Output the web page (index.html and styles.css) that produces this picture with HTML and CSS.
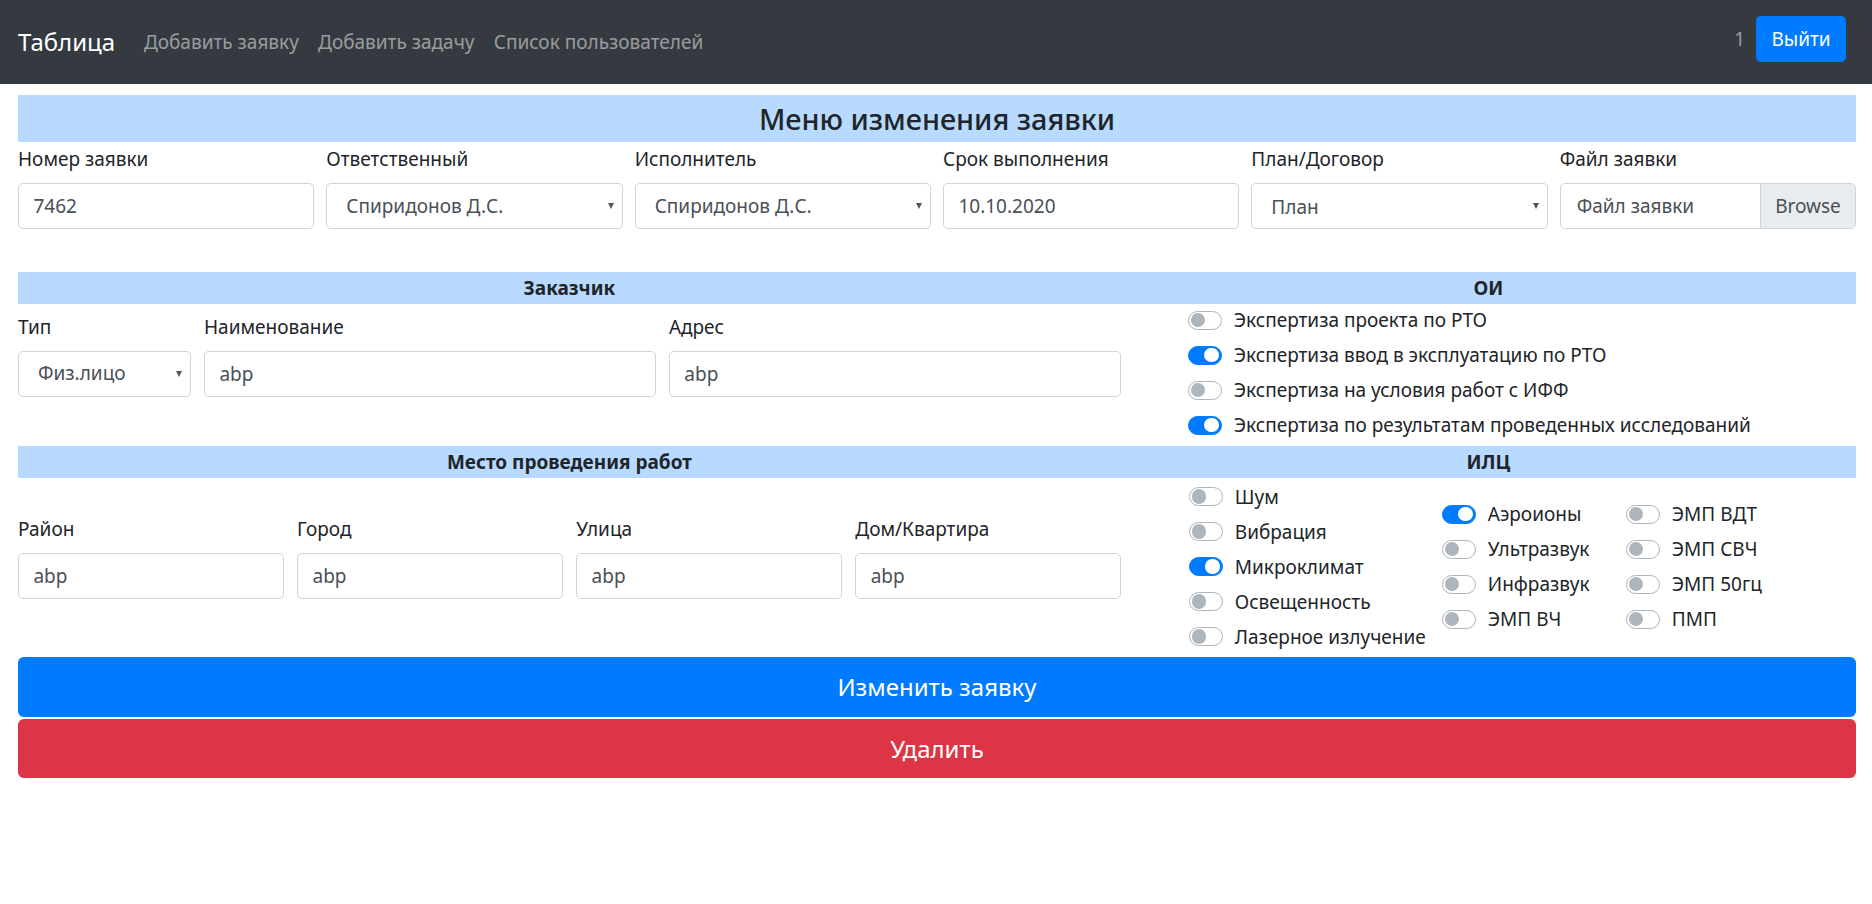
FILE: index.html
```html
<!DOCTYPE html>
<html lang="ru">
<head>
<meta charset="utf-8">
<title>Таблица</title>
<link rel="stylesheet" href="styles.css">
</head>
<body>
<nav class="navbar">
  <a class="brand" href="#">Таблица</a>
  <ul class="nav-links">
    <li><a href="#">Добавить заявку</a></li>
    <li><a href="#">Добавить задачу</a></li>
    <li><a href="#">Список пользователей</a></li>
  </ul>
  <div class="nav-right">
    <span class="user">1</span>
    <button class="btn-logout" type="button">Выйти</button>
  </div>
</nav>

<main class="page">
  <h4 class="title">Меню изменения заявки</h4>

  <div class="top-row">
    <div class="field">
      <label>Номер заявки</label>
      <input class="control" type="text" value="7462">
    </div>
    <div class="field">
      <label>Ответственный</label>
      <div class="select-wrap"><select class="control select"><option>Спиридонов Д.С.</option></select></div>
    </div>
    <div class="field">
      <label>Исполнитель</label>
      <div class="select-wrap"><select class="control select"><option>Спиридонов Д.С.</option></select></div>
    </div>
    <div class="field">
      <label>Срок выполнения</label>
      <input class="control" type="text" value="10.10.2020">
    </div>
    <div class="field">
      <label>План/Договор</label>
      <div class="select-wrap"><select class="control select plan"><option>План</option></select></div>
    </div>
    <div class="field">
      <label>Файл заявки</label>
      <div class="control file"><span class="file-name">Файл заявки</span><span class="browse">Browse</span></div>
    </div>
  </div>

  <section class="split">
    <div class="col-left">
      <div class="band">Заказчик</div>
      <div class="fields3">
        <div class="field">
          <label>Тип</label>
          <div class="select-wrap"><select class="control select"><option>Физ.лицо</option></select></div>
        </div>
        <div class="field">
          <label>Наименование</label>
          <input class="control" type="text" value="abp">
        </div>
        <div class="field">
          <label>Адрес</label>
          <input class="control" type="text" value="abp">
        </div>
      </div>
    </div>
    <div class="col-right">
      <div class="band">ОИ</div>
      <div class="switches">
        <div class="switch-row"><span class="toggle"></span>Экспертиза проекта по РТО</div>
        <div class="switch-row"><span class="toggle on"></span>Экспертиза ввод в эксплуатацию по РТО</div>
        <div class="switch-row"><span class="toggle"></span>Экспертиза на условия работ с ИФФ</div>
        <div class="switch-row"><span class="toggle on"></span>Экспертиза по результатам проведенных исследований</div>
      </div>
    </div>
  </section>

  <section class="split">
    <div class="col-left">
      <div class="band">Место проведения работ</div>
      <div class="fields4">
        <div class="field">
          <label>Район</label>
          <input class="control" type="text" value="abp">
        </div>
        <div class="field">
          <label>Город</label>
          <input class="control" type="text" value="abp">
        </div>
        <div class="field">
          <label>Улица</label>
          <input class="control" type="text" value="abp">
        </div>
        <div class="field">
          <label>Дом/Квартира</label>
          <input class="control" type="text" value="abp">
        </div>
      </div>
    </div>
    <div class="col-right">
      <div class="band">ИЛЦ</div>
      <div class="ilc">
        <div class="ilc-col c1">
          <div class="switch-row"><span class="toggle"></span>Шум</div>
          <div class="switch-row"><span class="toggle"></span>Вибрация</div>
          <div class="switch-row"><span class="toggle on"></span>Микроклимат</div>
          <div class="switch-row"><span class="toggle"></span>Освещенность</div>
          <div class="switch-row"><span class="toggle"></span>Лазерное излучение</div>
        </div>
        <div class="ilc-col c2">
          <div class="switch-row"><span class="toggle on"></span>Аэроионы</div>
          <div class="switch-row"><span class="toggle"></span>Ультразвук</div>
          <div class="switch-row"><span class="toggle"></span>Инфразвук</div>
          <div class="switch-row"><span class="toggle"></span>ЭМП ВЧ</div>
        </div>
        <div class="ilc-col c3">
          <div class="switch-row"><span class="toggle"></span>ЭМП ВДТ</div>
          <div class="switch-row"><span class="toggle"></span>ЭМП СВЧ</div>
          <div class="switch-row"><span class="toggle"></span>ЭМП 50гц</div>
          <div class="switch-row"><span class="toggle"></span>ПМП</div>
        </div>
      </div>
    </div>
  </section>

  <button class="btn-block primary" type="button">Изменить заявку</button>
  <button class="btn-block danger" type="button">Удалить</button>
</main>
</body>
</html>
```

FILE: styles.css
```css
* { box-sizing: border-box; }

body {
  margin: 0;
  font-family: "Noto Sans", sans-serif;
  font-size: 19px;
  line-height: 1.5;
  color: #212529;
  background: #fff;
}

/* navbar */
.navbar {
  height: 84px;
  background: #343a40;
  display: flex;
  align-items: center;
  padding: 0 26px 0 18px;
}
.brand {
  font-size: 24px;
  color: #fff;
  text-decoration: none;
  margin-right: 19.2px;
}
.nav-links {
  display: flex;
  list-style: none;
  margin: 0;
  padding: 0;
}
.nav-links a {
  color: rgba(255, 255, 255, .5);
  text-decoration: none;
  padding: 0 9.6px;
}
.nav-right {
  margin-left: auto;
  display: flex;
  align-items: center;
  align-self: flex-start;
  margin-top: 16px;
}
.user {
  color: rgba(255, 255, 255, .5);
  margin-right: 11px;
}
.btn-logout {
  width: 90px;
  height: 46px;
  font: inherit;
  color: #fff;
  background: #007bff;
  border: 0;
  border-radius: 4.8px;
  padding: 0;
}

/* page */
.page {
  padding: 0 16px 0 18px;
}
.title {
  margin: 11px 0 3px;
  height: 47px;
  line-height: 47px;
  background: #b8daff;
  font-size: 28.8px;
  font-weight: 500;
  text-align: center;
}

.field label {
  display: block;
  line-height: 28.8px;
  margin-bottom: 9px;
}
.control {
  display: block;
  width: 100%;
  height: 46px;
  border: 1.2px solid #ced4da;
  border-radius: 4.8px;
  padding: 0 14.4px;
  font: inherit;
  color: #495057;
  background: #fff;
}
.select-wrap {
  position: relative;
}
.select-wrap::after {
  content: "";
  position: absolute;
  right: 9px;
  top: 20px;
  border-left: 3.5px solid transparent;
  border-right: 3.5px solid transparent;
  border-top: 6px solid #555;
  pointer-events: none;
}
.select {
  appearance: none;
  -webkit-appearance: none;
  padding-left: 19px;
}
.select.plan {
  padding-top: 3px;
}
.file {
  display: flex;
  align-items: stretch;
  padding: 0;
  overflow: hidden;
}
.file-name {
  flex: 1;
  display: flex;
  align-items: center;
  padding-left: 16px;
}
.browse {
  width: 95px;
  display: flex;
  align-items: center;
  justify-content: center;
  background: #e9ecef;
  border-left: 1.2px solid #ced4da;
}

.top-row {
  display: grid;
  grid-template-columns: repeat(6, 1fr);
  column-gap: 12px;
  margin-bottom: 43px;
}

/* split sections */
.split {
  display: grid;
  grid-template-columns: 60% 40%;
}
.band {
  height: 32px;
  line-height: 32px;
  background: #b8daff;
  text-align: center;
  font-weight: 700;
}
.fields3 {
  display: grid;
  grid-template-columns: 173px 1fr 1fr;
  column-gap: 13px;
  margin-top: 9px;
}
.fields4 {
  display: grid;
  grid-template-columns: repeat(4, 1fr);
  column-gap: 13.6px;
  margin-top: 37px;
}

.switches {
  padding: 2px 0 0 67px;
}
.switch-row {
  display: flex;
  align-items: center;
  height: 29px;
  margin-bottom: 6px;
  white-space: nowrap;
}
.toggle {
  position: relative;
  flex: none;
  width: 34px;
  height: 19.2px;
  border: 1.2px solid #adb5bd;
  border-radius: 9.6px;
  background: #fff;
  margin-right: 12px;
}
.toggle::after {
  content: "";
  position: absolute;
  left: 1.8px;
  top: 1.2px;
  width: 14.4px;
  height: 14.4px;
  border-radius: 50%;
  background: #adb5bd;
}
.toggle.on {
  background: #007bff;
  border-color: #007bff;
}
.toggle.on::after {
  left: 15.6px;
  background: #fff;
}

.ilc {
  display: flex;
  align-items: center;
  padding: 4.5px 0 0 68px;
}
.ilc-col.c1 { width: 253px; }
.ilc-col.c2 { width: 184px; }

/* buttons */
.btn-block {
  display: block;
  width: 100%;
  font: inherit;
  font-size: 24px;
  color: #fff;
  border: 0;
  border-radius: 5.8px;
}
.primary {
  height: 60px;
  background: #007bff;
}
.danger {
  height: 59px;
  margin-top: 2px;
  background: #dc3545;
}
```
